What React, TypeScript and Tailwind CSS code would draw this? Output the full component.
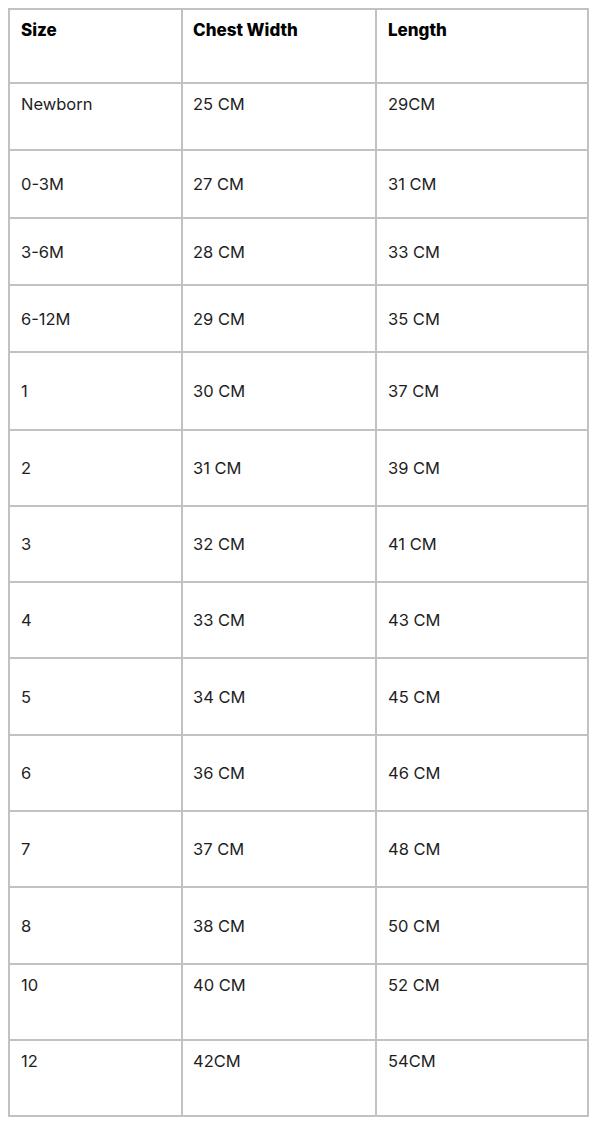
import React from 'react';

type Row = {
  size: string;
  chest: string;
  length: string;
  h: string;
  top?: boolean;
};

// heights measured line to line, bottom border included
const ROWS: Row[] = [
  { size: 'Newborn', chest: '25 CM', length: '29CM', h: 'h-[67px]', top: true },
  { size: '0-3M', chest: '27 CM', length: '31 CM', h: 'h-[68px]' },
  { size: '3-6M', chest: '28 CM', length: '33 CM', h: 'h-[67px]' },
  { size: '6-12M', chest: '29 CM', length: '35 CM', h: 'h-[67px]' },
  { size: '1', chest: '30 CM', length: '37 CM', h: 'h-[78px]' },
  { size: '2', chest: '31 CM', length: '39 CM', h: 'h-[76px]' },
  { size: '3', chest: '32 CM', length: '41 CM', h: 'h-[76px]' },
  { size: '4', chest: '33 CM', length: '43 CM', h: 'h-[76px]' },
  { size: '5', chest: '34 CM', length: '45 CM', h: 'h-[77px]' },
  { size: '6', chest: '36 CM', length: '46 CM', h: 'h-[76px]' },
  { size: '7', chest: '37 CM', length: '48 CM', h: 'h-[76px]' },
  { size: '8', chest: '38 CM', length: '50 CM', h: 'h-[77px]' },
  { size: '10', chest: '40 CM', length: '52 CM', h: 'h-[76px]', top: true },
  { size: '12', chest: '42CM', length: '54CM', h: 'h-[74px]', top: true },
];

const Cell: React.FC<{ children: React.ReactNode; col: number; top?: boolean }> = ({ children, col, top }) => (
  <div
    className={
      'flex ' +
      (col === 0 ? 'pl-[11px] ' : col === 1 ? 'border-l-2 border-[#c2c2c2] pl-[10px] ' : 'border-l-2 border-[#c2c2c2] pl-[11px] ') +
      (top ? 'items-start pt-[8px]' : 'items-center')
    }
  >
    {children}
  </div>
);

export default function App() {
  return (
    <div className="min-h-[1124px] bg-white pt-2 font-['Inter','Liberation_Sans',sans-serif] text-[16.5px] leading-6 text-[#1e1e1e]">
      <div className="ml-2 w-[581px] border-2 border-[#c2c2c2]">
        {/* header */}
        <div className="grid h-[74px] grid-cols-[171px_194px_1fr] border-b-2 border-[#c2c2c2] text-[17px] font-extrabold text-black">
          <Cell col={0} top>Size</Cell>
          <Cell col={1} top>Chest Width</Cell>
          <Cell col={2} top>Length</Cell>
        </div>

        {ROWS.map((r, i) => (
          <div
            key={r.size}
            className={
              'grid grid-cols-[171px_194px_1fr] ' +
              r.h +
              (i < ROWS.length - 1 ? ' border-b-2 border-[#c2c2c2]' : '')
            }
          >
            <Cell col={0} top={r.top}>{r.size}</Cell>
            <Cell col={1} top={r.top}>{r.chest}</Cell>
            <Cell col={2} top={r.top}>{r.length}</Cell>
          </div>
        ))}
      </div>
    </div>
  );
}
